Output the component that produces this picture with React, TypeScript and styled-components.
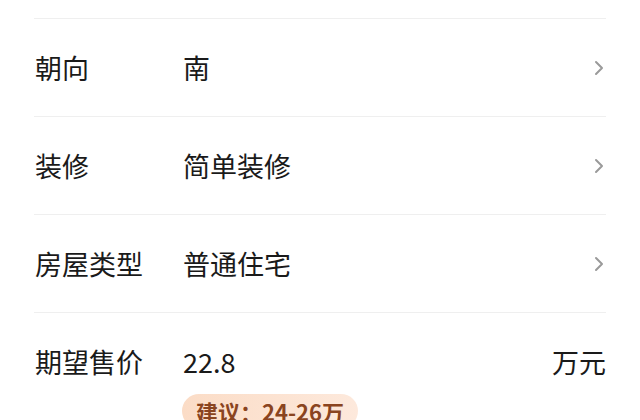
import styled, { createGlobalStyle } from 'styled-components'

const GlobalStyle = createGlobalStyle`
  html, body {
    margin: 0;
    padding: 0;
    background: #ffffff;
  }
  body {
    font-family: 'Noto Sans CJK SC', 'Noto Sans', sans-serif;
    color: #1a1a1a;
  }
`

const Form = styled.div`
  width: 640px;
  height: 420px;
  overflow: hidden;
  padding: 18px 34px 0;
  box-sizing: border-box;
`

const Row = styled.div`
  display: flex;
  align-items: center;
  box-sizing: border-box;
  height: 98px;
  border-top: 1px solid #efefef;
`

const Label = styled.div`
  width: 148px;
  flex-shrink: 0;
  padding-left: 1px;
  font-size: 27px;
  line-height: 36px;
  color: #1a1a1a;
`

const Value = styled.div`
  flex: 1;
  font-size: 27px;
  line-height: 36px;
  color: #1a1a1a;
`

const Unit = styled.div`
  font-size: 27px;
  line-height: 36px;
  color: #1a1a1a;
`

const Chevron = styled.svg`
  width: 10px;
  height: 16px;
  margin-right: 2px;
`

const PriceBlock = styled.div`
  border-top: 1px solid #efefef;
  padding-top: 31px;
`

const PriceRow = styled.div`
  display: flex;
  align-items: center;
`

const Hint = styled.div`
  display: inline-flex;
  align-items: center;
  margin: 14px 0 0 148px;
  padding: 0 14px;
  height: 34px;
  border-radius: 17px;
  background: linear-gradient(90deg, #fbdcc6 0%, #fde9dc 100%);
  color: #8a4420;
  font-size: 22px;
  font-weight: 700;
`

const Arrow = () => (
  <Chevron viewBox="0 0 10 16">
    <path d="M2 2 L8 8 L2 14" fill="none" stroke="#9a9a9a" strokeWidth="2" strokeLinecap="round" strokeLinejoin="round" />
  </Chevron>
)

const SelectRow = ({ label, value }: { label: string; value: string }) => (
  <Row>
    <Label>{label}</Label>
    <Value>{value}</Value>
    <Arrow />
  </Row>
)

export default function App() {
  return (
    <>
      <GlobalStyle />
      <Form>
        <SelectRow label="朝向" value="南" />
        <SelectRow label="装修" value="简单装修" />
        <SelectRow label="房屋类型" value="普通住宅" />
        <PriceBlock>
          <PriceRow>
            <Label>期望售价</Label>
            <Value>22.8</Value>
            <Unit>万元</Unit>
          </PriceRow>
          <Hint>建议：24-26万</Hint>
        </PriceBlock>
      </Form>
    </>
  )
}
